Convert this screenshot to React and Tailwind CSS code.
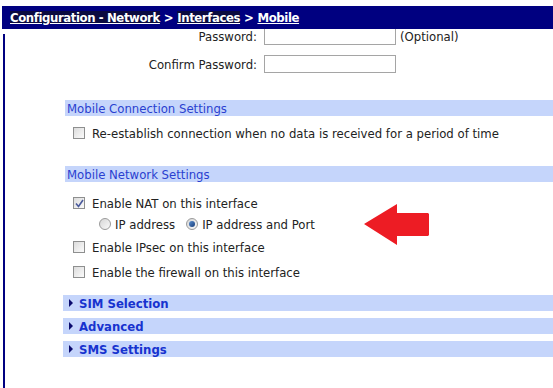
import React from 'react';

const Checkbox = ({ checked }) => (
  <span className="w-[12px] h-[12px] border border-[#8e8f8f] bg-gradient-to-br from-[#dcdcdc] to-[#fbfbfb] flex items-center justify-center shrink-0">
    {checked && (
      <svg width="9" height="9" viewBox="0 0 9 9">
        <path d="M1 4.5 L3.5 7.5 L8 1" fill="none" stroke="#4a5a9c" strokeWidth="1.6" />
      </svg>
    )}
  </span>
);

const Radio = ({ checked }) => (
  <span className="w-[12px] h-[12px] rounded-full border border-[#9a9a9a] bg-gradient-to-br from-[#d6d6d6] to-[#fafafa] flex items-center justify-center shrink-0">
    {checked && <span className="w-[6px] h-[6px] rounded-full bg-gradient-to-br from-[#5a8fd0] to-[#1b3f7a]" />}
  </span>
);

const CheckRow = ({ checked, label, className = '' }) => (
  <div className={`flex items-center gap-[7px] pl-[8px] ${className}`}>
    <Checkbox checked={checked} />
    <span>{label}</span>
  </div>
);

const SectionBar = ({ title, className = '' }) => (
  <div className={`h-[16px] bg-[#c5d5fb] text-[#2a3fd0] flex items-center pl-[2px] ${className}`}>{title}</div>
);

const Collapsible = ({ title, className = '' }) => (
  <div className={`h-[16px] bg-[#c5d5fb] text-[#1733cf] font-bold flex items-center pl-[6px] gap-[6px] ${className}`}>
    <svg width="4" height="8" viewBox="0 0 4 8">
      <path d="M0 0 L4 4 L0 8 Z" fill="#0b0b6e" />
    </svg>
    <span>{title}</span>
  </div>
);

export default function App() {
  return (
    <div className="w-[553px] h-[388px] bg-white overflow-hidden relative text-[13px] leading-none text-[#222] font-['DejaVu_Sans_Condensed','DejaVu_Sans',sans-serif]">
      {/* breadcrumb header */}
      <div className="relative z-10 mt-[6px] ml-[2px] h-[23px] bg-[#000080] flex items-center pl-[8px] font-bold text-white tracking-[-0.4px]">
        <span className="underline bg-[#0b0b40]">Configuration - Network</span>
        <span className="px-[4px]">&gt;</span>
        <span className="underline bg-[#0b0b40]">Interfaces</span>
        <span className="px-[4px]">&gt;</span>
        <span className="underline">Mobile</span>
      </div>

      <div className="flex">
        <div className="w-[2px] ml-[3px] mt-[5px] h-[360px] bg-[#000080] shrink-0" />
        <div className="flex-1 -mt-[2px] pl-[60px]">
          {/* password rows */}
          <div className="flex items-center h-[18px] -ml-[65px]">
            <span className="w-[257px] text-right">Password:</span>
            <span className="ml-[7px] w-[132px] h-[18px] border border-[#a5a5a5] bg-white" />
            <span className="ml-[4px]">(Optional)</span>
          </div>
          <div className="flex items-center h-[18px] mt-[10px] -ml-[65px]">
            <span className="w-[257px] text-right">Confirm Password:</span>
            <span className="ml-[7px] w-[132px] h-[18px] border border-[#a5a5a5] bg-white" />
          </div>

          <SectionBar title="Mobile Connection Settings" className="mt-[27px]" />
          <CheckRow label="Re-establish connection when no data is received for a period of time" className="h-[12px] mt-[11px]" />

          <SectionBar title="Mobile Network Settings" className="mt-[27px]" />
          <CheckRow checked label="Enable NAT on this interface" className="h-[12px] mt-[15px]" />
          <div className="flex items-center h-[12px] mt-[9px] pl-[34px]">
            <Radio />
            <span className="ml-[4px]">IP address</span>
            <span className="ml-[11px]"><Radio checked /></span>
            <span className="ml-[4px]">IP address and Port</span>
          </div>
          <CheckRow label="Enable IPsec on this interface" className="h-[12px] mt-[11px]" />
          <CheckRow label="Enable the firewall on this interface" className="h-[12px] mt-[13px]" />

          <div className="-ml-[2px] mt-[17px] flex flex-col gap-[7px]">
            <Collapsible title="SIM Selection" />
            <Collapsible title="Advanced" />
            <Collapsible title="SMS Settings" />
          </div>
        </div>
      </div>

      {/* annotation arrow */}
      <svg className="absolute left-[363px] top-[203px]" width="68" height="43" viewBox="0 0 68 43">
        <polygon points="1,21 34,1 34,10 65,10 66,11 66,32 65,33 34,33 34,42" fill="#ed1c24" />
      </svg>
    </div>
  );
}
